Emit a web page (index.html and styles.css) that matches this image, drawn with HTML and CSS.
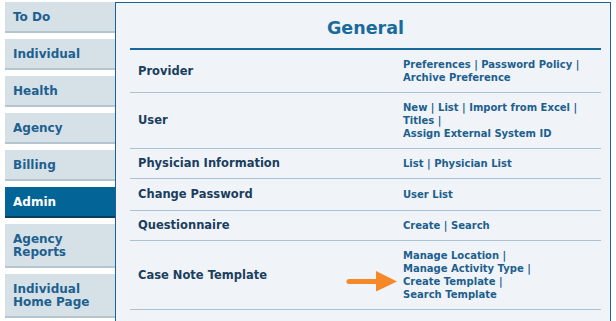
FILE: index.html
```html
<!DOCTYPE html>
<html>
<head>
<meta charset="utf-8">
<link rel="stylesheet" href="styles.css">
</head>
<body>
<div class="page">
  <nav class="nav">
    <a class="tab">To Do</a>
    <a class="tab">Individual</a>
    <a class="tab">Health</a>
    <a class="tab">Agency</a>
    <a class="tab">Billing</a>
    <a class="tab tab-active">Admin</a>
    <a class="tab">Agency<br>Reports</a>
    <a class="tab">Individual<br>Home Page</a>
  </nav>
  <main class="panel">
    <h1 class="title">General</h1>
    <div class="rows">
      <div class="row">
        <div class="label">Provider</div>
        <div class="links"><a>Preferences</a> | <a>Password Policy</a> |<br><a>Archive Preference</a></div>
      </div>
      <div class="row">
        <div class="label">User</div>
        <div class="links"><a>New</a> | <a>List</a> | <a>Import from Excel</a> |<br><a>Titles</a> |<br><a>Assign External System ID</a></div>
      </div>
      <div class="row">
        <div class="label">Physician Information</div>
        <div class="links"><a>List</a> | <a>Physician List</a></div>
      </div>
      <div class="row row-tall">
        <div class="label">Change Password</div>
        <div class="links"><a>User List</a></div>
      </div>
      <div class="row">
        <div class="label">Questionnaire</div>
        <div class="links"><a>Create</a> | <a>Search</a></div>
      </div>
      <div class="row">
        <div class="label">Case Note Template</div>
        <div class="links links-arrow"><a>Manage Location</a> |<br><a>Manage Activity Type</a> |<br><a>Create Template</a> |<br><a>Search Template</a>
          <svg class="arrow" width="54" height="24" viewBox="0 0 54 24"><line x1="4" y1="12.5" x2="33" y2="12.5" stroke="#f5892a" stroke-width="5" stroke-linecap="round"/><polygon points="31,2 52,12.5 31,22.5" fill="#f5892a"/></svg>
        </div>
      </div>
    </div>
  </main>
</div>
</body>
</html>
```
FILE: styles.css
```css
html, body {
  margin: 0;
  padding: 0;
  background: #ffffff;
  overflow: hidden;
}
body {
  font-family: "DejaVu Sans", Verdana, sans-serif;
  font-weight: bold;
  font-size: 11.5px;
  line-height: 13px;
}
.page {
  display: flex;
  align-items: flex-start;
  padding: 2px 0 0 5px;
}
.nav {
  width: 110px;
  display: flex;
  flex-direction: column;
  gap: 6px;
}
.tab {
  display: block;
  background: #d6e0e7;
  border-bottom: 2px solid #b5c5d0;
  color: #1d6090;
  font-size: 12px;
  padding: 9px 8px 7px;
  min-height: 13px;
}
.tab-active {
  background: #036497;
  border-bottom-color: #0a3e5c;
  color: #ffffff;
}
.panel {
  width: 471px;
  min-height: 340px;
  background: #f0f4f8;
  border: 1px solid #1d6191;
  padding: 0 9px 0 14px;
}
.title {
  margin: 0;
  padding: 14px 0 9px;
  font-size: 17.5px;
  line-height: 22px;
  text-align: center;
  color: #1a6a9c;
  border-bottom: 2px solid #17679b;
}
.row {
  display: grid;
  grid-template-columns: 265px 1fr;
  border-bottom: 1px solid #a9c2d4;
  padding: 8px 0;
}
.row-tall {
  padding: 9px 0;
}
.label {
  align-self: center;
  padding-left: 8px;
  color: #1b3e5e;
}
.links {
  padding-left: 8px;
  font-size: 10px;
  white-space: nowrap;
  color: #1d5f8e;
}
.links a {
  color: #1d5f8e;
}
.links-arrow {
  position: relative;
}
.arrow {
  position: absolute;
  left: -50px;
  top: 20px;
}
```
